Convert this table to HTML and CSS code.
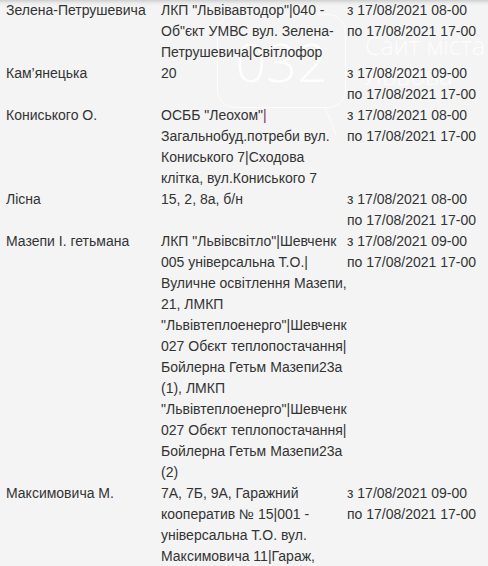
FILE: index.html
```html
<!DOCTYPE html>
<html lang="uk">
<head>
<meta charset="utf-8">
<title>Графік відключень</title>
<link rel="stylesheet" href="styles.css">
</head>
<body>
<div class="page">
  <div class="watermark" aria-hidden="true">
    <div class="bubble"><span class="num">032</span></div>
    <div class="site">Сайт міста<br>Львова</div>
  </div>
  <div class="table">
    <div class="row">
      <div class="cell">Зелена-Петрушевича</div>
      <div class="cell">ЛКП "Львівавтодор"|040 - Об"єкт УМВС вул. Зелена-Петрушевича|Світлофор</div>
      <div class="cell">з 17/08/2021 08-00<br>по 17/08/2021 17-00</div>
    </div>
    <div class="row">
      <div class="cell">Кам’янецька</div>
      <div class="cell">20</div>
      <div class="cell">з 17/08/2021 09-00<br>по 17/08/2021 17-00</div>
    </div>
    <div class="row">
      <div class="cell">Кониського О.</div>
      <div class="cell">ОСББ "Леохом"<span class="pipe">|</span>Загальнобуд.потреби вул. Кониського 7|Сходова клітка, вул.Кониського 7</div>
      <div class="cell">з 17/08/2021 08-00<br>по 17/08/2021 17-00</div>
    </div>
    <div class="row">
      <div class="cell">Лісна</div>
      <div class="cell">15, 2, 8а, б/н</div>
      <div class="cell">з 17/08/2021 08-00<br>по 17/08/2021 17-00</div>
    </div>
    <div class="row">
      <div class="cell">Мазепи І. гетьмана</div>
      <div class="cell">ЛКП "Львівсвітло"|Шевченк 005 універсальна Т.О.|Вуличне освітлення Мазепи, 21, ЛМКП "Львівтеплоенерго"|Шевченк 027 Обєкт теплопостачання|Бойлерна Гетьм Мазепи23а (1), ЛМКП "Львівтеплоенерго"|Шевченк 027 Обєкт теплопостачання|Бойлерна Гетьм Мазепи23а (2)</div>
      <div class="cell">з 17/08/2021 09-00<br>по 17/08/2021 17-00</div>
    </div>
    <div class="row">
      <div class="cell">Максимовича М.</div>
      <div class="cell">7А, 7Б, 9А, Гаражний кооператив № 15|001 - універсальна Т.О. вул. Максимовича 11|Гараж, вул.Максимовича 7|Гаражі</div>
      <div class="cell">з 17/08/2021 09-00<br>по 17/08/2021 17-00</div>
    </div>
  </div>
</div>
</body>
</html>
```

FILE: styles.css
```css
html, body {
  margin: 0;
  padding: 0;
}
body {
  background: linear-gradient(#cfcfcf 0, #eaeaea 3px, #f4f4f4 6px) no-repeat, #f4f4f4;
  font-family: "Liberation Sans", Arial, sans-serif;
  font-size: 14px;
  line-height: 21px;
  color: #333;
  overflow: hidden;
}
.page {
  position: relative;
  padding-left: 6px;
}
.table {
  position: relative;
}
.row {
  display: grid;
  grid-template-columns: 155px 186px 1fr;
}
.cell {
  min-width: 0;
}
.pipe {
  color: #7a2d5e;
}
.watermark {
  position: absolute;
  left: 0;
  top: 0;
  width: 488px;
  height: 160px;
  pointer-events: none;
}
.bubble {
  position: absolute;
  left: 217px;
  top: 14px;
  width: 127px;
  height: 92px;
  border: 1px solid rgba(255, 255, 255, 0.85);
  border-radius: 18px;
  display: flex;
  align-items: center;
  justify-content: center;
}
.bubble::after {
  content: "";
  position: absolute;
  right: 14px;
  bottom: -28px;
  width: 18px;
  height: 28px;
  border-right: 1px solid rgba(255, 255, 255, 0.85);
  transform: skewX(22deg);
}
.num {
  font-size: 54px;
  line-height: 60px;
  font-weight: 300;
  color: rgba(255, 255, 255, 0.85);
  font-family: "Open Sans", "Liberation Sans", sans-serif;
}
.site {
  position: absolute;
  left: 365px;
  top: 30px;
  font-size: 25px;
  line-height: 30px;
  color: rgba(255, 255, 255, 0.85);
  font-family: "Open Sans", "Liberation Sans", sans-serif;
  font-weight: 300;
}
```
